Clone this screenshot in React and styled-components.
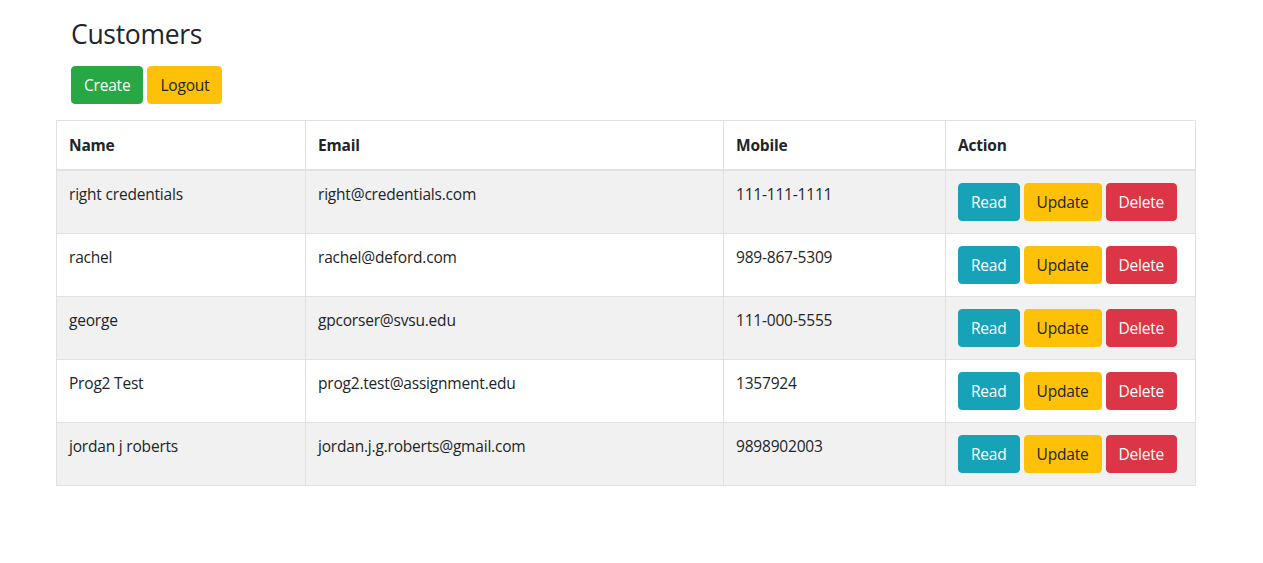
import React from 'react';
import styled, { createGlobalStyle } from 'styled-components';

const GlobalStyle = createGlobalStyle`
  body {
    margin: 0;
    background: #fff;
    color: #212529;
    font-family: "Open Sans", "Noto Sans", sans-serif;
    font-size: 16px;
    line-height: 1.5;
  }
`;

const Container = styled.div`
  width: 1139px;
  margin-left: 56px;
  padding-top: 19px;
`;

const Header = styled.div`
  padding: 0 15px;
`;

const Title = styled.h3`
  margin: 0 0 15px;
  font-size: 26.5px;
  font-weight: 400;
  line-height: 1.2;
  letter-spacing: -0.3px;
`;

const Toolbar = styled.div`
  display: flex;
  gap: 4px;
  margin-bottom: 16px;
`;

const colors = {
  success: { bg: '#28a745', fg: '#fff' },
  warning: { bg: '#ffc107', fg: '#212529' },
  info: { bg: '#17a2b8', fg: '#fff' },
  danger: { bg: '#dc3545', fg: '#fff' },
};

const Button = styled.button`
  box-sizing: border-box;
  height: 38px;
  padding: 0 12px;
  border: 1px solid ${p => colors[p.$variant].bg};
  border-radius: 4px;
  background: ${p => colors[p.$variant].bg};
  color: ${p => colors[p.$variant].fg};
  font-family: inherit;
  font-size: 15.5px;
  letter-spacing: -0.2px;
  line-height: 24px;
  cursor: pointer;
`;

const Table = styled.table`
  width: 1139px;
  border-collapse: collapse;
  table-layout: fixed;
  border: 1px solid #dee2e6;
`;

const Th = styled.th`
  width: ${p => p.$w}px;
  box-sizing: border-box;
  height: 50px;
  padding: 0 12px 12px;
  text-align: left;
  font-weight: 700;
  font-size: 15.5px;
  line-height: 24px;
  letter-spacing: -0.2px;
  border: 1px solid #dee2e6;
  border-bottom-width: 2px;
  vertical-align: bottom;
`;

const Tr = styled.tr`
  background: ${p => (p.$striped ? '#f1f1f1' : '#fff')};
`;

const Td = styled.td`
  padding: 12px;
  height: 38px;
  font-size: 15.5px;
  letter-spacing: -0.2px;
  border: 1px solid #dee2e6;
  vertical-align: top;
`;

const Actions = styled.div`
  display: flex;
  gap: 4px;
`;

const customers = [
  ['right credentials', 'right@credentials.com', '111-111-1111'],
  ['rachel', 'rachel@deford.com', '989-867-5309'],
  ['george', 'gpcorser@svsu.edu', '111-000-5555'],
  ['Prog2 Test', 'prog2.test@assignment.edu', '1357924'],
  ['jordan j roberts', 'jordan.j.g.roberts@gmail.com', '9898902003'],
];

const App = () => (
  <>
    <GlobalStyle />
    <Container>
      <Header>
        <Title>Customers</Title>
        <Toolbar>
          <Button $variant="success">Create</Button>
          <Button $variant="warning">Logout</Button>
        </Toolbar>
      </Header>
      <Table>
        <thead>
          <tr>
            <Th $w={249}>Name</Th>
            <Th $w={418}>Email</Th>
            <Th $w={222}>Mobile</Th>
            <Th $w={250}>Action</Th>
          </tr>
        </thead>
        <tbody>
          {customers.map((c, i) => (
            <Tr key={c[1]} $striped={i % 2 === 0}>
              <Td>{c[0]}</Td>
              <Td>{c[1]}</Td>
              <Td>{c[2]}</Td>
              <Td>
                <Actions>
                  <Button $variant="info">Read</Button>
                  <Button $variant="warning">Update</Button>
                  <Button $variant="danger">Delete</Button>
                </Actions>
              </Td>
            </Tr>
          ))}
        </tbody>
      </Table>
    </Container>
  </>
);

export default App;
